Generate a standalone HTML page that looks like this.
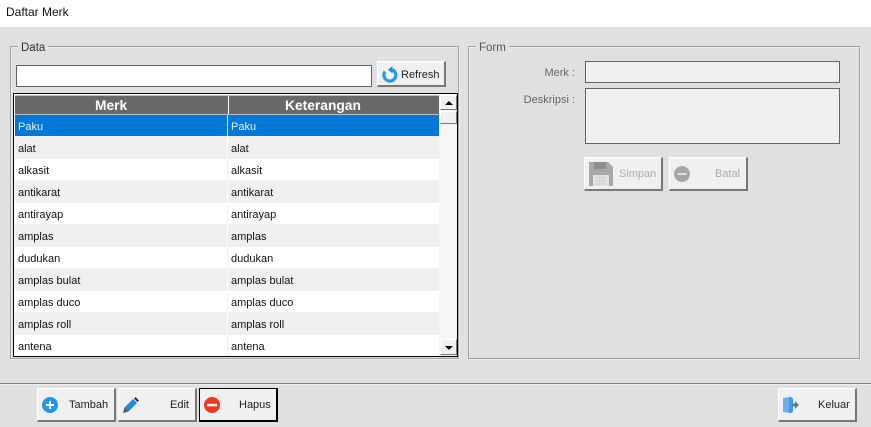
<!DOCTYPE html>
<html>
<head>
<meta charset="utf-8">
<style>
html,body{margin:0;padding:0}
body{width:871px;height:427px;overflow:hidden;background:#e0e0e0;position:relative;font-family:"Liberation Sans",sans-serif;font-size:11px;color:#111}
.a{position:absolute;box-sizing:border-box}
.t{position:absolute;white-space:nowrap;line-height:14px}
.fs{border:1px solid #a0a0a0;box-shadow:inset 1px 1px 0 #eee,1px 1px 0 #eee}
.inp{border:1px solid #646464}
.btn{background:#f0f0f0;border-top:1px solid #fff;border-left:1px solid #fff;border-right:2px solid #777;border-bottom:2px solid #777}
.row{position:absolute;left:15px;width:424px;height:22px}
.row span{position:absolute;top:5px;line-height:14px;white-space:nowrap}
.row span.l{left:3px}
.row span.r{left:216px}
.row i{position:absolute;left:212px;top:0;bottom:0;width:1px;background:#fff}
.g{background:#efefef}
.w{background:#fff}
.w i{background:#f0f0f0}
.h{color:#fff;font-weight:bold;font-size:13.8px;top:99px}
</style>
</head>
<body>
<div class="a" style="left:0;top:0;width:871px;height:27px;background:#fff"></div>
<div class="t" style="left:6px;top:5px;font-size:12px;color:#111">Daftar Merk</div>

<div class="a fs" style="left:10px;top:46px;width:449px;height:313px"></div>
<div class="t" style="left:18px;top:41px;background:#e0e0e0;padding:0 3px;color:#333;font-size:11.5px">Data</div>
<div class="a inp" style="left:16px;top:65px;width:356px;height:22px;background:#fff"></div>

<div class="a btn" style="left:377px;top:61px;width:69px;height:26px"></div>
<svg class="a" style="left:382px;top:65px" width="16" height="18" viewBox="0 0 16 18"><path d="M3 6.500a6 6 0 1 0 7.500-1.800" fill="none" stroke="#1e9bf0" stroke-width="3.200"/><path d="M10.500 1v7.500L6 4.700z" fill="#1a8fe0"/></svg>
<div class="t" style="left:401px;top:68px;color:#222;font-size:11px">Refresh</div>

<div class="a" style="left:13px;top:93px;width:445px;height:264px;border:1px solid #000;background:#fff"></div>
<div class="a" style="left:15px;top:95px;width:424px;height:20px;background:#696969;border-top:1px solid #bbb;border-bottom:1px solid #bbb"></div>
<div class="a" style="left:228px;top:96px;width:1px;height:18px;background:#fff"></div>
<div class="t h" style="left:95px">Merk</div>
<div class="t h" style="left:285px">Keterangan</div>

<div class="row" style="top:115px;height:21px;background:#0078d7;color:#e8f2fb"><span class="l">Paku</span><i></i><span class="r">Paku</span></div>
<div class="row g" style="top:136px;height:23px"><span class="l" style="top:6px">alat</span><i></i><span class="r" style="top:6px">alat</span></div>
<div class="row w" style="top:159px;height:21px"><span class="l">alkasit</span><i></i><span class="r">alkasit</span></div>
<div class="row g" style="top:180px;height:23px"><span class="l" style="top:6px">antikarat</span><i></i><span class="r" style="top:6px">antikarat</span></div>
<div class="row w" style="top:203px;height:21px"><span class="l">antirayap</span><i></i><span class="r">antirayap</span></div>
<div class="row g" style="top:224px;height:23px"><span class="l" style="top:6px">amplas</span><i></i><span class="r" style="top:6px">amplas</span></div>
<div class="row w" style="top:247px;height:21px"><span class="l">dudukan</span><i></i><span class="r">dudukan</span></div>
<div class="row g" style="top:268px;height:23px"><span class="l" style="top:6px">amplas bulat</span><i></i><span class="r" style="top:6px">amplas bulat</span></div>
<div class="row w" style="top:291px;height:21px"><span class="l">amplas duco</span><i></i><span class="r">amplas duco</span></div>
<div class="row g" style="top:312px;height:23px"><span class="l" style="top:6px">amplas roll</span><i></i><span class="r" style="top:6px">amplas roll</span></div>
<div class="row w" style="top:335px;height:21px"><span class="l">antena</span><i></i><span class="r">antena</span></div>

<div class="a" style="left:439px;top:94px;width:18px;height:262px;background:#f5f5f5"></div>
<div class="a btn" style="left:440px;top:95px;width:17px;height:15px;border-right-width:1px;border-bottom-width:1px"></div>
<svg class="a" style="left:445px;top:101px" width="8" height="4"><path d="M0 4h8L4 0z" fill="#000"/></svg>
<div class="a btn" style="left:440px;top:111px;width:17px;height:13px;border-right-width:1px;border-bottom-width:1px"></div>
<div class="a btn" style="left:440px;top:339px;width:17px;height:16px;border-right-width:1px;border-bottom-width:1px"></div>
<svg class="a" style="left:445px;top:346px" width="8" height="4"><path d="M0 0h8L4 4z" fill="#000"/></svg>

<div class="a fs" style="left:468px;top:46px;width:392px;height:313px"></div>
<div class="t" style="left:476px;top:41px;background:#e0e0e0;padding:0 3px;color:#555;font-size:11.5px">Form</div>
<div class="t" style="left:500px;width:75px;top:66px;text-align:right;color:#666">Merk :</div>
<div class="t" style="left:500px;width:75px;top:93px;text-align:right;color:#666">Deskripsi :</div>
<div class="a inp" style="left:585px;top:61px;width:255px;height:22px;background:#f0f0f0"></div>
<div class="a inp" style="left:585px;top:88px;width:255px;height:56px;background:#f0f0f0"></div>

<div class="a btn" style="left:584px;top:157px;width:79px;height:34px"></div>
<svg class="a" style="left:589px;top:162px" width="24" height="24" viewBox="0 0 24 24"><path d="M0 0h19l5 5v19H0z" fill="#a8a8a8"/><path d="M5 0h12v7H5z" fill="#8f8f8f"/><path d="M4 13h16v11H4z" fill="#e2e2e2"/><path d="M7 16h10M7 19h10M7 22h10" stroke="#c8c8c8"/></svg>
<div class="t" style="left:619px;top:167px;color:#a8a8b0">Simpan</div>

<div class="a btn" style="left:669px;top:157px;width:79px;height:34px"></div>
<svg class="a" style="left:674px;top:166px" width="16" height="16"><circle cx="8" cy="8" r="8" fill="#a6a6a6"/><rect x="3.500" y="7" width="9" height="2" fill="#ddd"/></svg>
<div class="t" style="left:715px;top:167px;color:#a8a8b0">Batal</div>

<div class="a" style="left:0;top:383px;width:871px;height:1px;background:#808080"></div>
<div class="a" style="left:0;top:384px;width:871px;height:1px;background:#eee"></div>

<div class="a btn" style="left:37px;top:388px;width:79px;height:34px"></div>
<svg class="a" style="left:42px;top:397px" width="16" height="16"><circle cx="8" cy="8" r="8" fill="#2196f3"/><path d="M8 4v8M4 8h8" stroke="#fff" stroke-width="2"/></svg>
<div class="t" style="left:69px;top:398px;color:#222">Tambah</div>

<div class="a btn" style="left:118px;top:388px;width:79px;height:34px"></div>
<svg class="a" style="left:123px;top:397px" width="16" height="16" viewBox="0 0 16 16"><path d="M1.500 10.500L10 2l4 4-8.500 8.500z" fill="#1e88e5"/><path d="M1.500 10.500l4 4L0 16z" fill="#5d5348"/><path d="M11 1.500l1.500-1.500 3.500 3.500L14.500 5z" fill="#263238"/></svg>
<div class="t" style="left:170px;top:398px;color:#222">Edit</div>

<div class="a btn" style="left:199px;top:388px;width:79px;height:34px;border:1px solid #000;border-right-width:2px;border-bottom-width:2px"></div>
<svg class="a" style="left:204px;top:397px" width="16" height="16"><circle cx="8" cy="8" r="8" fill="#f4361e"/><rect x="3" y="6.800" width="10" height="2.500" fill="#fff"/></svg>
<div class="t" style="left:239px;top:398px;color:#222">Hapus</div>

<div class="a btn" style="left:778px;top:388px;width:79px;height:34px"></div>
<svg class="a" style="left:783px;top:397px" width="16" height="16" viewBox="0 0 16 16"><path d="M0 1l7-1q3 0 3 3v10q0 3-3 3l-7-1z" fill="#64b0f4"/><path d="M6 0q4 0 4 3v10q0 3-4 3z" fill="#3d96f0"/><path d="M9 6.500h3V4l4 4-4 4V9.500H9z" fill="#607d8b"/></svg>
<div class="t" style="left:818px;top:398px;color:#222">Keluar</div>
</body>
</html>
